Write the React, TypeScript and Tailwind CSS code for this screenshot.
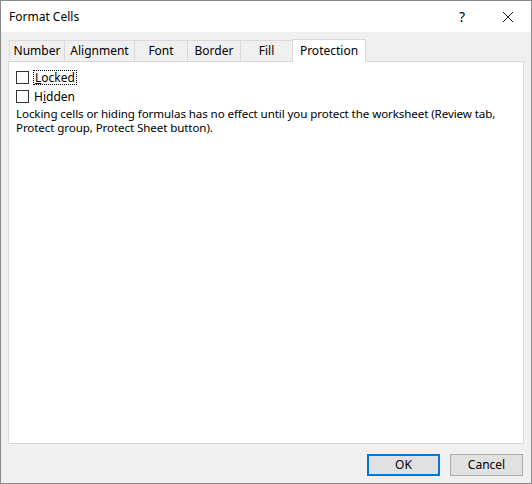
export default function App() {
  const tabs = [
    ["Number", "w-[56px]"],
    ["Alignment", "w-[71px]"],
    ["Font", "w-[54px]"],
    ["Border", "w-[54px]"],
    ["Fill", "w-[53px]"],
  ];
  return (
    <div className="w-[532px] h-[484px] border border-[#8a8a8a] bg-[#f0f0f0] flex flex-col text-[12px] text-black" style={{ fontFamily: '"Noto Sans", "Open Sans", sans-serif' }}>
      <div className="h-[31px] bg-white flex items-center pl-[8px] shrink-0">
        <span className="flex-1">Format Cells</span>
        <span className="w-[46px] text-center text-[14px]">?</span>
        <span className="w-[46px] text-center">
          <svg width="12" height="12" viewBox="0 0 12 12" className="inline"><path d="M1 1L11 11M11 1L1 11" stroke="#222" strokeWidth="1" /></svg>
        </span>
      </div>
      <div className="flex items-end pl-[8px] pt-[7px] h-[29px] shrink-0">
        {tabs.map(([t, w]) => (
          <div key={t} className={`${w} h-[21px] border border-b-0 border-[#d9d9d9] -ml-px first:ml-0 flex items-center justify-center`}>{t}</div>
        ))}
        <div className="w-[74px] h-[23px] bg-white border border-b-0 border-[#d9d9d9] -ml-px flex items-center justify-center relative top-px">Protection</div>
      </div>
      <div className="mx-[7px] h-[383px] bg-white border border-[#d9d9d9] px-[7px] pt-[8px]">
        <div className="flex items-center gap-[4px] h-[15px]">
          <span className="w-[13px] h-[13px] border border-[#333] bg-white" />
          <span className="border border-dotted border-black px-px leading-[13px]"><u>L</u>ocked</span>
        </div>
        <div className="flex items-center gap-[5px] h-[15px] mt-[4px]">
          <span className="w-[13px] h-[13px] border border-[#333] bg-white" />
          <span>H<u>i</u>dden</span>
        </div>
        <p className="mt-[3px] leading-[14px] text-[11.6px] tracking-[-0.1px]">Locking cells or hiding formulas has no effect until you protect the worksheet (Review tab, Protect group, Protect Sheet button).</p>
      </div>
      <div className="flex justify-end gap-[10px] pr-[8px] pt-[10px]">
        <div className="w-[73px] h-[22px] bg-[#e1e1e1] border-2 border-[#0078d7] flex items-center justify-center">OK</div>
        <div className="w-[73px] h-[22px] bg-[#e1e1e1] border border-[#adadad] flex items-center justify-center">Cancel</div>
      </div>
    </div>
  );
}
